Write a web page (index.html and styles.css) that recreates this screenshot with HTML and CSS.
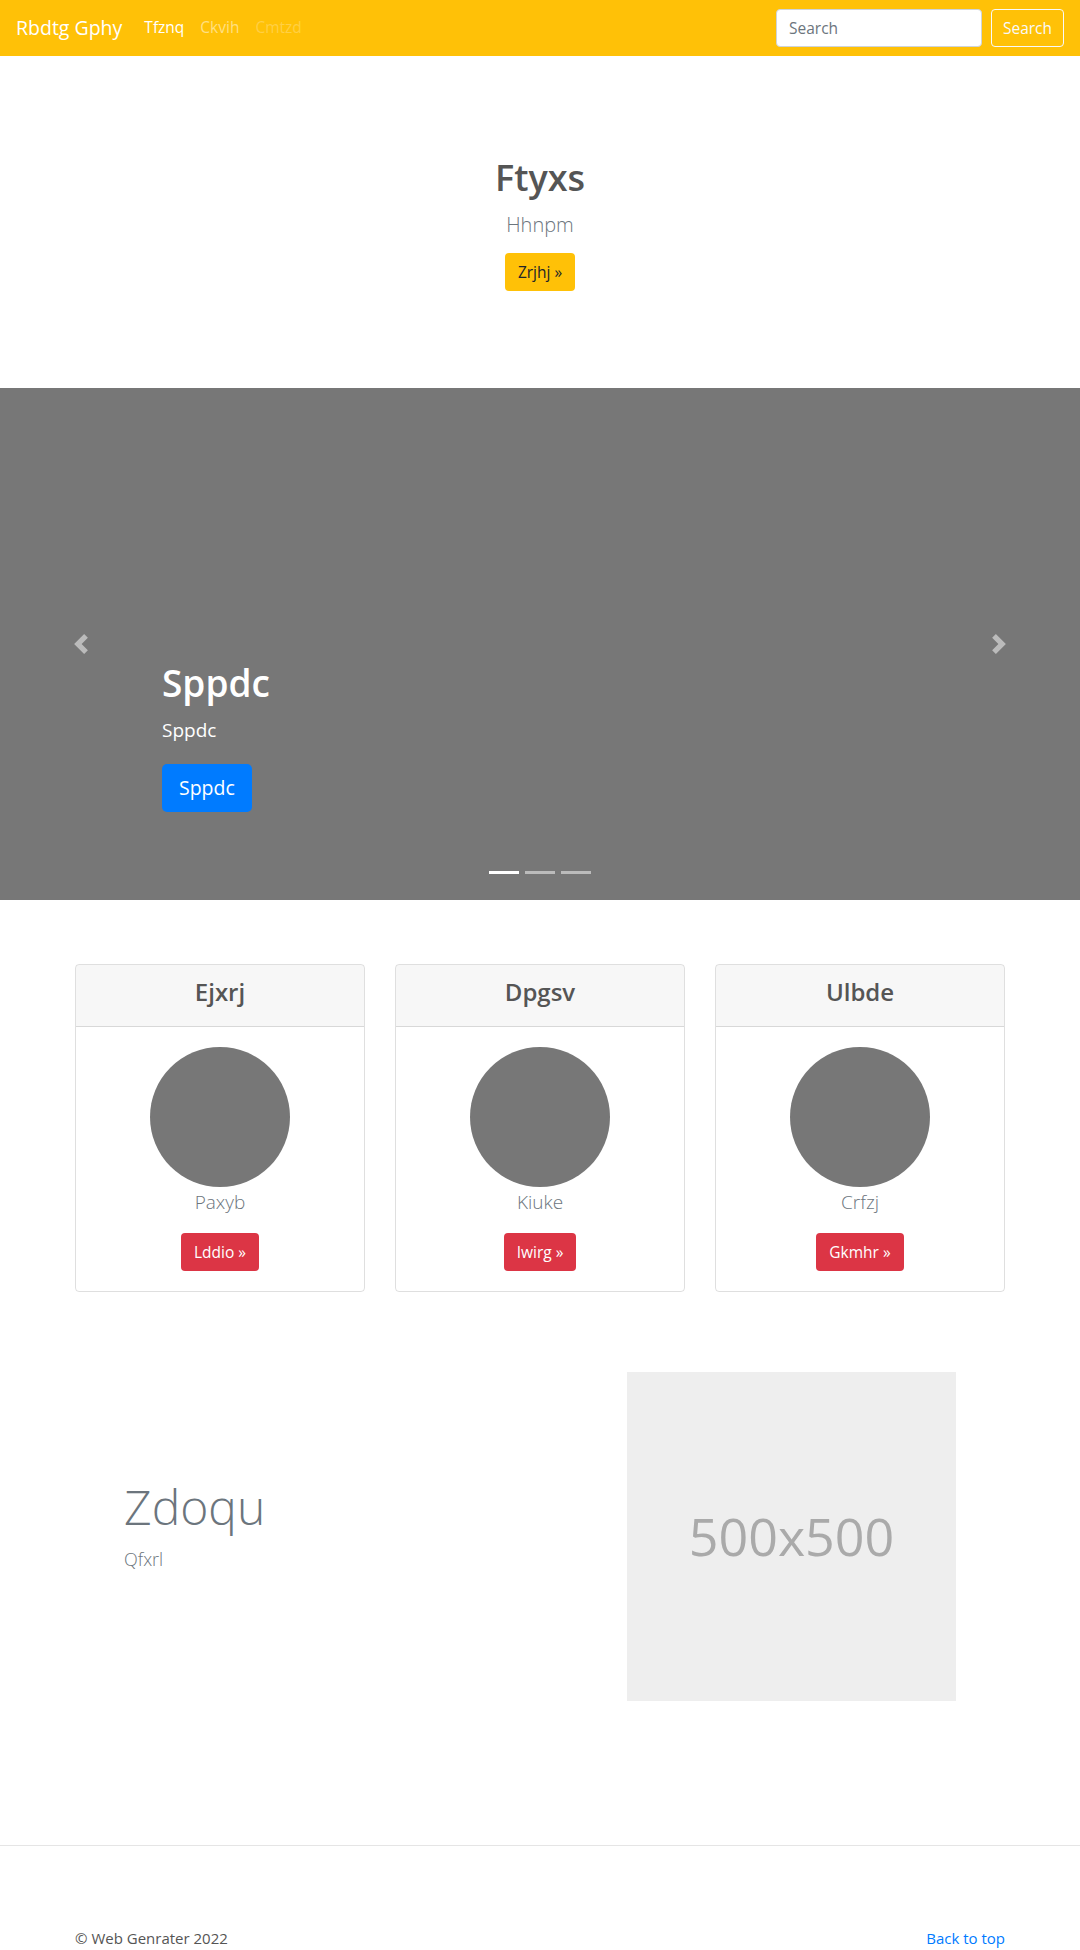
FILE: index.html
```html
<!DOCTYPE html>
<html lang="en">
<head>
<meta charset="utf-8">
<title>Rbdtg Gphy</title>
<link rel="stylesheet" href="styles.css">
</head>
<body>
<header class="navbar">
  <a class="brand" href="#">Rbdtg Gphy</a>
  <nav class="nav-links">
    <a class="nav-link active" href="#">Tfznq</a>
    <a class="nav-link" href="#">Ckvih</a>
    <a class="nav-link disabled" href="#">Cmtzd</a>
  </nav>
  <form class="search-form">
    <input class="search-input" type="text" placeholder="Search">
    <button class="btn-outline" type="button">Search</button>
  </form>
</header>

<section class="jumbotron">
  <h1 class="jumbo-title">Ftyxs</h1>
  <p class="jumbo-lead">Hhnpm</p>
  <a class="btn btn-warning" href="#">Zrjhj »</a>
</section>

<section class="carousel">
  <div class="caption">
    <h1 class="caption-title">Sppdc</h1>
    <p class="caption-text">Sppdc</p>
    <a class="btn btn-lg btn-primary" href="#">Sppdc</a>
  </div>
  <a class="control control-prev" href="#">
    <svg class="control-icon" viewBox="0 0 8 8" width="20" height="20"><path d="M5.25 0l-4 4 4 4 1.5-1.5-2.5-2.5 2.5-2.5-1.5-1.5z"/></svg>
  </a>
  <a class="control control-next" href="#">
    <svg class="control-icon" viewBox="0 0 8 8" width="20" height="20"><path d="M2.75 0l-1.5 1.5 2.5 2.5-2.5 2.5 1.5 1.5 4-4-4-4z"/></svg>
  </a>
  <ol class="indicators">
    <li class="indicator active"></li>
    <li class="indicator"></li>
    <li class="indicator"></li>
  </ol>
</section>

<section class="cards">
  <div class="card">
    <div class="card-header"><h4 class="card-title">Ejxrj</h4></div>
    <div class="card-body">
      <div class="circle"></div>
      <p class="card-text">Paxyb</p>
      <a class="btn btn-danger" href="#">Lddio »</a>
    </div>
  </div>
  <div class="card">
    <div class="card-header"><h4 class="card-title">Dpgsv</h4></div>
    <div class="card-body">
      <div class="circle"></div>
      <p class="card-text">Kiuke</p>
      <a class="btn btn-danger" href="#">Iwirg »</a>
    </div>
  </div>
  <div class="card">
    <div class="card-header"><h4 class="card-title">Ulbde</h4></div>
    <div class="card-body">
      <div class="circle"></div>
      <p class="card-text">Crfzj</p>
      <a class="btn btn-danger" href="#">Gkmhr »</a>
    </div>
  </div>
</section>

<section class="featurette">
  <div class="featurette-text">
    <h2 class="featurette-heading">Zdoqu</h2>
    <p class="featurette-lead">Qfxrl</p>
  </div>
  <div class="placeholder">500x500</div>
</section>

<hr class="divider">

<footer class="footer">
  <p class="copy">© Web Genrater 2022</p>
  <a class="back-top" href="#">Back to top</a>
</footer>
</body>
</html>
```

FILE: styles.css
```css
* { box-sizing: border-box; }

body {
  margin: 0;
  font-family: "Open Sans", "Noto Sans", "Liberation Sans", sans-serif;
  font-size: 16px;
  line-height: 1.5;
  color: #555;
  background: #fff;
}

a { text-decoration: none; }

/* Navbar */
.navbar {
  height: 56px;
  background: #ffc107;
  display: flex;
  align-items: center;
  padding: 0 16px;
}
.brand {
  color: #fff;
  font-size: 19.5px;
  line-height: 30px;
  margin-right: 14px;
  white-space: nowrap;
}
.nav-links {
  display: flex;
  flex: 1;
}
.nav-link {
  padding: 0 8px;
  font-size: 15.5px;
  color: rgba(255, 255, 255, 0.5);
}
.nav-link.active { color: #fff; }
.nav-link.disabled { color: rgba(255, 255, 255, 0.25); }

.search-form {
  display: flex;
  gap: 9px;
}
.search-input {
  width: 206px;
  height: 38px;
  border: 1px solid #ced4da;
  border-radius: 4px;
  padding: 6px 12px;
  font-family: inherit;
  font-size: 15.5px;
  color: #495057;
  background: #fff;
}
.search-input::placeholder { color: #6c757d; }
.btn-outline {
  height: 38px;
  width: 73px;
  border: 1px solid #f8f9fa;
  border-radius: 4px;
  background: transparent;
  color: #f8f9fa;
  font-family: inherit;
  font-size: 15.5px;
  padding: 0;
}

/* Buttons */
.btn {
  display: inline-block;
  height: 38px;
  line-height: 36px;
  padding: 0 12px;
  border: 1px solid transparent;
  border-radius: 4px;
  font-size: 15.5px;
}
.btn-warning { background: #ffc107; color: #212529; }
.btn-danger { background: #dc3545; color: #fff; }
.btn-primary { background: #007bff; color: #fff; }
.btn-lg {
  height: 48px;
  line-height: 46px;
  padding: 0 16px;
  font-size: 19.5px;
  border-radius: 5px;
}

/* Jumbotron */
.jumbotron {
  height: 332px;
  padding-top: 100px;
  display: flex;
  flex-direction: column;
  align-items: center;
}
.jumbo-title {
  margin: 0 0 11px;
  font-size: 36px;
  line-height: 1.2;
  font-weight: 600;
  color: #555;
}
.jumbo-lead {
  margin: 0 0 13px;
  font-size: 20px;
  line-height: 30px;
  font-weight: 300;
  color: #6c757d;
}

/* Carousel */
.carousel {
  position: relative;
  height: 512px;
  background: #777;
  display: flex;
  align-items: flex-end;
  padding: 0 162px 88px;
}
.caption { color: #fff; }
.caption-title {
  margin: 0 0 10px;
  font-size: 37px;
  line-height: 44px;
  font-weight: 600;
}
.caption-text {
  margin: 0 0 19px;
  font-size: 19px;
  line-height: 30px;
}
.control {
  position: absolute;
  top: 0;
  bottom: 0;
  width: 15%;
  display: flex;
  align-items: center;
  justify-content: center;
}
.control-prev { left: 0; }
.control-next { right: 0; }
.control-icon { fill: #fff; opacity: 0.5; }
.indicators {
  position: absolute;
  left: 0;
  right: 0;
  bottom: 26px;
  margin: 0;
  padding: 0;
  list-style: none;
  display: flex;
  justify-content: center;
  gap: 6px;
}
.indicator {
  width: 30px;
  height: 3px;
  background: rgba(255, 255, 255, 0.5);
}
.indicator.active { background: #fff; }

/* Cards */
.cards {
  width: 930px;
  margin: 64px auto 0;
  display: grid;
  grid-template-columns: repeat(3, 1fr);
  gap: 30px;
}
.card {
  border: 1px solid rgba(0, 0, 0, 0.125);
  border-radius: 4px;
  text-align: center;
  overflow: hidden;
}
.card-header {
  background: rgba(0, 0, 0, 0.03);
  border-bottom: 1px solid rgba(0, 0, 0, 0.125);
  padding: 13px 20px 11px;
}
.card-title {
  margin: 0 0 8px;
  font-size: 24px;
  line-height: 28.8px;
  font-weight: 600;
  color: #555;
}
.card-body { padding: 20px; }
.circle {
  width: 140px;
  height: 140px;
  border-radius: 50%;
  background: #777;
  margin: 0 auto;
}
.card-text {
  margin: 0 0 16px;
  font-size: 19px;
  line-height: 30px;
  font-weight: 300;
  color: #6c757d;
}

/* Featurette */
.featurette {
  width: 930px;
  margin: 80px auto 0;
  padding: 0 49px;
  display: grid;
  grid-template-columns: 1fr 329px;
  align-items: center;
}
.featurette-text { padding-top: 3px; }
.featurette-heading {
  margin: 0 0 10px;
  font-size: 48px;
  line-height: 1.2;
  font-weight: 300;
  color: #6c757d;
}
.featurette-lead {
  margin: 0 0 25px;
  font-size: 18px;
  line-height: 27px;
  font-weight: 300;
  color: #6c757d;
}
.placeholder {
  width: 329px;
  height: 329px;
  background: #eee;
  color: #aaa;
  font-size: 52px;
  display: flex;
  align-items: center;
  justify-content: center;
}

.divider {
  margin: 144px 0 0;
  border: 0;
  border-top: 1px solid #e5e5e5;
}

.footer {
  width: 930px;
  margin: 80px auto 0;
  display: flex;
  justify-content: space-between;
  font-size: 15px;
  line-height: 24px;
}
.copy { margin: 0 0 16px; }
.back-top { color: #007bff; }
```
